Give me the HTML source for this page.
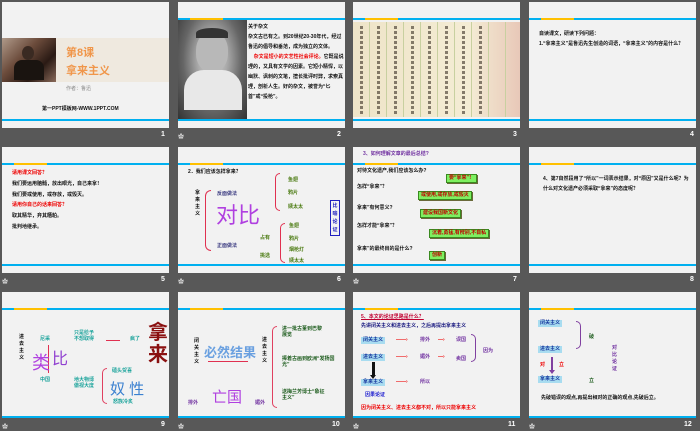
<!DOCTYPE html>
<html><head><meta charset="utf-8"><style>
*{margin:0;padding:0;box-sizing:border-box}
body{width:700px;height:431px;background:#585858;position:relative;overflow:hidden;font-family:"Liberation Sans","Noto Sans CJK SC",sans-serif}
.s{position:absolute;width:167px;height:126px;background:#f2f2f2;overflow:hidden}
.s>*{position:absolute}
.tb{left:0;top:16px;width:167px;height:2px;background:#00b0f0}
.tb:after{content:"";position:absolute;left:12px;top:0;width:33px;height:2px;background:#ffc000}
.bb{left:0;top:117px;width:167px;height:2px;background:#00b0f0}
.n{position:absolute;color:#fff;font-size:7px;font-weight:bold}
.ic{position:absolute;color:#ddd;font-size:6px}
.x{font-size:5px;font-weight:bold;color:#111;white-space:nowrap;line-height:7px}
.r{color:#e00}
.g{color:#4a7a10}
.p{color:#7030a0}
.tl{color:#1aa39b}
.box{background:#7ef060;border:1px solid #3a8a20;color:#c00000;font-size:5px;font-weight:bold;padding:0 2px;line-height:7px;box-shadow:1px 1px 0 #6a6a3a}
.lb{background:#a8dcf0;color:#1a3aa0;font-size:5px;font-weight:bold;padding:0 2px;line-height:7px}
.br{border:1px solid #e04060;border-right:none;border-radius:6px 0 0 6px}
.brr{border:1px solid #e04060;border-left:none;border-radius:0 6px 6px 0}
</style></head><body>

<!-- slide 1 -->
<div class="s" style="left:2px;top:2px">
<div style="left:0;top:36px;width:167px;height:44px;background:#efe9df"></div>
<div style="left:0;top:36px;width:54px;height:44px;background:linear-gradient(135deg,#b09a8a,#6a4a3a 40%,#2a1a14 70%,#8a6a5a)"></div>
<div style="left:20px;top:44px;width:12px;height:14px;border-radius:50%;background:#3a2a22"></div>
<div style="left:12px;top:58px;width:30px;height:20px;background:#1a1410;border-radius:8px 8px 0 0"></div>
<div style="left:64px;top:42px;font-size:11px;color:#f0964a;font-weight:bold">第8课</div>
<div style="left:64px;top:60px;font-size:11px;color:#f0964a;font-weight:bold">拿来主义</div>
<div class="x" style="left:64px;top:84px;color:#888;font-weight:normal">作者：鲁迅</div>
<div class="x" style="left:40px;top:104px">第一PPT模板网-WWW.1PPT.COM</div>
<div class="bb"></div>
</div>
<span class="n" style="left:161px;top:131px">1</span>

<!-- slide 2 -->
<div class="s" style="left:178px;top:2px">
<div class="tb"></div>
<div style="left:0;top:18px;width:69px;height:99px;background:radial-gradient(ellipse at 50% 40%,#ddd 0,#aaa 30%,#666 60%,#333 100%)"></div>
<div style="left:18px;top:30px;width:32px;height:40px;border-radius:45%;background:#b8b8b8"></div>
<div style="left:18px;top:26px;width:32px;height:10px;border-radius:50% 50% 0 0;background:#333"></div>
<div style="left:6px;top:68px;width:58px;height:40px;border-radius:20px 20px 0 0;background:#e8e8e8"></div>
<div class="x" style="left:70px;top:20px;line-height:10px;white-space:normal;width:96px">关于杂文<br>杂文古已有之。到20世纪20-30年代，经过鲁迅的倡导和垂范，成为独立的文体。<br>&nbsp;&nbsp;&nbsp;&nbsp;<span class="r">杂文是短小的文艺性社会评论。</span>它既是说理的，又具有文学的因素。它短小精悍，以幽默、讽刺的文笔，擅长批评时弊，求索真理，剖析人生。好的杂文，被誉为“匕首”或“投枪”。</div>
<div class="bb"></div>
</div>
<span class="ic" style="left:178px;top:132px">✿</span><span class="n" style="left:337px;top:131px">2</span>

<!-- slide 3 -->
<div class="s" style="left:353px;top:2px">
<div class="tb"></div>
<div style="left:0;top:20px;width:167px;height:95px;background:linear-gradient(90deg,#eee4c8,#f4ecd4 70%,#e8c8b8);"></div>
<div style="left:0;top:20px;width:167px;height:95px;background:repeating-linear-gradient(90deg,transparent 0 16px,#c8d0a0 16px 17px);"></div>
<div style="left:2px;top:24px;width:140px;height:88px;background:repeating-linear-gradient(90deg,transparent 0 5px,rgba(40,30,20,.55) 5px 8px,transparent 8px 17px);-webkit-mask:repeating-linear-gradient(0deg,#000 0 3px,transparent 3px 5px)"></div>
<div class="bb"></div>
</div>
<span class="n" style="left:513px;top:131px">3</span>

<!-- slide 4 -->
<div class="s" style="left:529px;top:2px">
<div class="tb"></div>
<div class="x" style="left:10px;top:27px;line-height:10px;white-space:normal;width:150px">自读课文，研读下列问题：<br>1.“拿来主义”是鲁迅先生创造的词语，“拿来主义”的内容是什么？</div>
<div class="bb"></div>
</div>
<span class="n" style="left:690px;top:131px">4</span>

<!-- slide 5 -->
<div class="s" style="left:2px;top:147px">
<div class="tb"></div>
<div class="x" style="left:10px;top:21px;line-height:10.8px">
<span class="r">请用课文回答？</span><br>我们要运用脑髓，放出眼光，自己来拿！<br>我们要或使用，或存放，或毁灭。<br><span class="r">请用你自己的话来回答？</span><br>取其精华，弃其糟粕。<br>批判地继承。</div>
<div class="bb"></div>
</div>
<span class="ic" style="left:2px;top:277px">✿</span><span class="n" style="left:161px;top:276px">5</span>

<!-- slide 6 -->
<div class="s" style="left:178px;top:147px">
<div class="tb"></div>
<div class="x" style="left:10px;top:22px">2．我们应该怎样拿来？</div>
<div class="x" style="left:17px;top:43px;line-height:7px;width:6px;white-space:normal">拿来主义</div>
<div class="br" style="left:27px;top:43px;width:6px;height:61px;border-color:#e03050"></div>
<div class="x" style="left:39px;top:44px;color:#3a3a80">反面做法</div>
<div class="x" style="left:39px;top:96px;color:#3a3a80">正面做法</div>
<div style="left:38px;top:56px;font-size:22px;color:#b040e0;line-height:26px">对比</div>
<div class="br" style="left:97px;top:26px;width:5px;height:38px;border-color:#e03050"></div>
<div class="x g" style="left:110px;top:30px">鱼翅</div>
<div class="x g" style="left:110px;top:43px">鸦片</div>
<div class="x g" style="left:110px;top:57px">姨太太</div>
<div class="br" style="left:102px;top:76px;width:5px;height:40px;border-color:#e03050"></div>
<div class="x g" style="left:82px;top:88px">占有</div>
<div class="x g" style="left:82px;top:106px">挑选</div>
<div class="x g" style="left:111px;top:76px">鱼翅</div>
<div class="x g" style="left:111px;top:89px">鸦片</div>
<div class="x g" style="left:111px;top:100px">烟枪灯</div>
<div class="x g" style="left:111px;top:111px">姨太太</div>
<div class="x" style="left:152px;top:53px;border:1px solid #2020c0;color:#2020c0;width:10px;white-space:normal;text-align:center;line-height:8px;padding:1px 0">比喻论证</div>
<div class="bb"></div>
</div>
<span class="ic" style="left:178px;top:277px">✿</span><span class="n" style="left:337px;top:276px">6</span>

<!-- slide 7 -->
<div class="s" style="left:353px;top:147px">
<div class="x" style="left:10px;top:4px;color:#7030a0">3、如何理解文章的最后总结?</div>
<div class="tb"></div>
<div class="x" style="left:4px;top:21px">对待文化遗产,我们应该怎么办?</div>
<div class="box" style="left:93px;top:27px">要“拿来”！</div>
<div class="x" style="left:4px;top:37px">怎样“拿来”？</div>
<div class="box" style="left:65px;top:44px">或使用,或存放,或毁灭</div>
<div class="x" style="left:4px;top:58px">拿来”有何意义?</div>
<div class="box" style="left:67px;top:62px">建设我国新文化</div>
<div class="x" style="left:4px;top:76px">怎样才能“拿来”？</div>
<div class="box" style="left:76px;top:82px">沉着,勇猛,有辨别,不自私</div>
<div class="x" style="left:4px;top:99px">拿来”的最终目的是什么?</div>
<div class="box" style="left:76px;top:104px">创新</div>
<div class="bb"></div>
</div>
<span class="ic" style="left:353px;top:277px">✿</span><span class="n" style="left:513px;top:276px">7</span>

<!-- slide 8 -->
<div class="s" style="left:529px;top:147px">
<div class="tb"></div>
<div class="x" style="left:14px;top:27px;line-height:10px;white-space:normal;width:146px">4、第7自然段用了“所以”一词表示结果，对“原因”又是什么呢？为什么对文化遗产必须采取“拿来”的态度呢？</div>
<div class="bb"></div>
</div>
<span class="n" style="left:690px;top:276px">8</span>

<!-- slide 9 -->
<div class="s" style="left:2px;top:292px">
<div class="tb"></div>
<div class="x" style="left:17px;top:42px;width:6px;white-space:normal;line-height:7px">进去主义</div>
<div class="x tl" style="left:38px;top:44px">尼采</div>
<div class="x tl" style="left:38px;top:85px">中国</div>
<div style="left:46px;top:53px;width:1px;height:28px;background:#e03050"></div>
<div style="left:30px;top:57px;font-size:18px;color:#b040e0">类</div>
<div style="left:50px;top:53px;font-size:16px;color:#9040d0">比</div>
<div class="x tl" style="left:72px;top:38px;line-height:6px">只是给予<br>不想取得</div>
<div style="left:104px;top:48px;width:14px;height:1px;background:#e03050"></div>
<div class="x tl" style="left:128px;top:44px">疯了</div>
<div style="left:146px;top:30px;font-size:20px;color:#8a1010;line-height:22px;width:22px;font-weight:bold">拿来</div>
<div class="x tl" style="left:72px;top:85px;line-height:6px">地大物博<br>傲视大度</div>
<div class="br" style="left:100px;top:76px;width:5px;height:36px"></div>
<div class="x tl" style="left:110px;top:76px">磕头贺喜</div>
<div style="left:108px;top:86px;font-size:15px;color:#3a80d0">奴 性</div>
<div class="x tl" style="left:111px;top:107px">怒族冷炙</div>
<div class="bb" style="top:124px"></div>
</div>
<span class="ic" style="left:2px;top:422px">✿</span><span class="n" style="left:161px;top:421px">9</span>

<!-- slide 10 -->
<div class="s" style="left:178px;top:292px">
<div class="tb"></div>
<div class="x" style="left:16px;top:46px;width:6px;white-space:normal;line-height:7px">闭关主义</div>
<div style="left:26px;top:50px;font-size:13px;color:#6aa0e0;font-weight:bold">必然结果</div>
<div style="left:30px;top:69px;width:40px;height:1px;background:#e03050"></div>
<div class="x" style="left:84px;top:45px;width:6px;white-space:normal;line-height:7px">进去主义</div>
<div class="br" style="left:94px;top:34px;width:5px;height:82px"></div>
<div class="x g" style="left:104px;top:34px;color:#1a5a1a;line-height:6px">进一批古董到巴黎<br>展览</div>
<div class="x g" style="left:104px;top:64px;color:#1a5a1a;line-height:6px">捧着古画到欧洲“发扬国<br>光”</div>
<div class="x g" style="left:104px;top:97px;color:#1a5a1a;line-height:6px">送梅兰芳博士“象征<br>主义”</div>
<div style="left:34px;top:94px;font-size:15px;color:#b040e0">亡国</div>
<div class="x p" style="left:10px;top:108px">排外</div>
<div class="x p" style="left:77px;top:108px">媚外</div>
<div class="bb" style="top:124px"></div>
</div>
<span class="ic" style="left:178px;top:422px">✿</span><span class="n" style="left:332px;top:421px">10</span>

<!-- slide 11 -->
<div class="s" style="left:353px;top:292px">
<div class="tb"></div>
<div class="x" style="left:8px;top:22px;color:#c00030;text-decoration:underline">5、本文的论证思路是什么？</div>
<div class="x" style="left:8px;top:31px;color:#1a1a80">先讲闭关主义和进去主义，之后再提出拿来主义</div>
<div class="lb" style="left:8px;top:45px">闭关主义</div>
<div class="lb" style="left:8px;top:62px">进去主义</div>
<div class="lb" style="left:8px;top:87px">拿来主义</div>
<div class="x" style="left:12px;top:100px;color:#2020d0">因果论证</div>
<div class="x r" style="left:8px;top:113px">因为闭关主义、进去主义都不对，所以只能拿来主义</div>
<div style="left:19px;top:70px;width:3px;height:14px;background:#111"></div>
<div style="left:17px;top:83px;border:3.5px solid transparent;border-top:4px solid #111"></div>
<div class="x r" style="left:43px;top:45px">——›</div>
<div class="x r" style="left:43px;top:62px">——›</div>
<div class="x r" style="left:43px;top:87px">——›</div>
<div class="x r" style="left:85px;top:45px">—›</div>
<div class="x r" style="left:85px;top:62px">—›</div>
<div class="x p" style="left:67px;top:45px">排外</div>
<div class="x p" style="left:67px;top:62px">媚外</div>
<div class="x p" style="left:67px;top:87px">所以</div>
<div class="x p" style="left:103px;top:45px">误国</div>
<div class="x p" style="left:103px;top:64px">卖国</div>
<div class="brr" style="left:118px;top:42px;width:5px;height:28px;border-color:#8040a0"></div>
<div class="x p" style="left:130px;top:56px">因为</div>
<div class="bb" style="top:124px"></div>
</div>
<span class="ic" style="left:353px;top:422px">✿</span><span class="n" style="left:508px;top:421px">11</span>

<!-- slide 12 -->
<div class="s" style="left:529px;top:292px">
<div class="tb"></div>
<div class="lb" style="left:9px;top:28px">闭关主义</div>
<div class="lb" style="left:9px;top:54px">进去主义</div>
<div class="lb" style="left:9px;top:84px">拿来主义</div>
<div class="brr" style="left:47px;top:29px;width:5px;height:28px;border-color:#8040a0"></div>
<div class="x" style="left:60px;top:42px;color:#1a5a1a">破</div>
<div class="x" style="left:60px;top:86px;color:#1a5a1a">立</div>
<div class="x r" style="left:11px;top:70px">对</div>
<div class="x r" style="left:30px;top:70px">立</div>
<div style="left:22px;top:65px;width:2px;height:14px;background:#8040a0"></div>
<div style="left:20px;top:78px;border:3px solid transparent;border-top:4px solid #8040a0"></div>
<div class="x p" style="left:83px;top:53px;width:6px;white-space:normal;line-height:7px">对比论证</div>
<div class="x" style="left:12px;top:103px">先破错误的观点,再提出相对的正确的观点,先破后立。</div>
<div class="bb" style="top:124px"></div>
</div>
<span class="ic" style="left:529px;top:422px">✿</span><span class="n" style="left:684px;top:421px">12</span>

</body></html>
